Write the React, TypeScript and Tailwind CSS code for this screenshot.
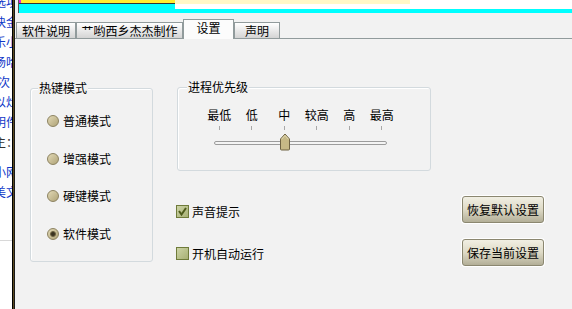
import React from "react";

const Radio = ({ label, checked }: { label: string; checked?: boolean }) => (
  <div className="flex items-center h-[14px]">
    <span className="w-[12px] h-[12px] rounded-full border border-[#8c8260] bg-gradient-to-br from-[#e2d9b6] to-[#b0a478] flex items-center justify-center">
      {checked && (
        <span className="w-[6px] h-[6px] rounded-full bg-[#3a3220] border border-[#6d6342]" />
      )}
    </span>
    <span className="ml-[4px] text-[12px] leading-[14px]">{label}</span>
  </div>
);

const Check = ({ label, checked }: { label: string; checked?: boolean }) => (
  <div className="flex items-center h-[13px]">
    <span className="w-[13px] h-[13px] border border-[#6f7b3a] bg-gradient-to-br from-[#cdd4a6] to-[#a7b074] flex items-center justify-center">
      {checked && (
        <svg width="11" height="11" viewBox="0 0 11 11">
          <path d="M2 5 L4.5 8.5 L9 2" fill="none" stroke="#4e5b1c" strokeWidth="2" />
        </svg>
      )}
    </span>
    <span className="ml-[3px] text-[12px] leading-[14px]">{label}</span>
  </div>
);

const Button = ({ label }: { label: string }) => (
  <button className="w-[82px] h-[27px] rounded-[3px] border border-[#8b8770] bg-gradient-to-b from-[#f1efe3] via-[#dedac6] to-[#b3af98] text-[12px] leading-[14px] text-black shadow-[0_0_0_1px_#ffffff]">
    {label}
  </button>
);

const Tab = ({ label, w, active }: { label: string; w: string; active?: boolean }) =>
  active ? (
    <div
      className={`${w} h-[20px] mb-[-1px] bg-[#fcfcfc] border border-b-0 border-[#919b9c] flex justify-center pt-[1px] text-[12px] leading-[14px] relative`}
    >
      {label}
    </div>
  ) : (
    <div
      className={`${w} h-[16px] bg-gradient-to-b from-[#ffffff] to-[#d4d4d4] border border-b-0 border-[#919b9c] flex items-center justify-center text-[12px] leading-[14px]`}
    >
      {label}
    </div>
  );

const leftLines = ["选项", "块金", "乐小", "场哈", "(次", "以灶", "明件"];

export default function App() {
  const levels = ["最低", "低", "中", "较高", "高", "最高"];
  return (
    <div className="w-[572px] h-[309px] flex overflow-hidden bg-[#f2f2f2] text-black font-['Noto_Sans_CJK_SC','Noto_Sans',sans-serif]">
      {/* clipped window behind */}
      <div className="w-[12px] h-full bg-white overflow-hidden flex flex-col">
        <div className="mt-[-8px] ml-[-6px] flex flex-col text-[12px] leading-[20px] text-[#1038c8] whitespace-nowrap">
          {leftLines.map((t) => (
            <span key={t}>{t}</span>
          ))}
          <span className="text-[#333]">主：</span>
          <span className="mt-[10px]">小网</span>
          <span>美文</span>
        </div>
        <div className="mt-[38px] h-px bg-[#d8d8d8]" />
      </div>
      <div className="w-px h-full bg-black" />
      <div className="w-px h-full bg-[#5a4a20]" />
      <div className="w-px h-full bg-[#1a1a1a]" />

      <div className="flex-1 flex flex-col">
        {/* strip of the window above */}
        <div className="h-[13px] flex">
          <div className="w-[3px] bg-[#f2f2f2]" />
          <div className="w-px bg-[#555]" />
          <div className="w-[156px] flex flex-col">
            <div className="h-[3px] flex">
              <div className="w-[2px] bg-[#e020e0]" />
              <div className="flex-1 bg-[#ffee30]" />
            </div>
            <div className="h-px bg-[#333]" />
            <div className="flex-1 bg-[#00ffff]" />
          </div>
          <div className="w-[235px] flex flex-col">
            <div className="h-[4px] bg-[#fff8c8]" />
            <div className="h-[5px] bg-white" />
            <div className="flex-1 bg-[#00ffff]" />
          </div>
          <div className="flex-1 flex flex-col">
            <div className="h-[9px] bg-white" />
            <div className="flex-1 bg-[#00ffff]" />
          </div>
        </div>

        {/* tabs */}
        <div className="h-[26px] flex items-end pl-[1px] border-b border-[#919b9c]">
          <Tab label="软件说明" w="w-[60px]" />
          <Tab label="艹哟西乡杰杰制作" w="w-[107px]" />
          <Tab label="设置" w="w-[51px]" active />
          <Tab label="声明" w="w-[46px]" />
        </div>

        {/* page */}
        <div className="flex-1 flex pt-[49px] pl-[15px]">
          <div className="relative w-[123px] h-[174px] border border-[#d3dade] rounded-[3px] shadow-[inset_1px_1px_0_#ffffff] flex flex-col pl-[16px] pt-[25px] gap-[23.5px]">
            <span className="absolute left-[7px] top-[-8px] px-[1px] bg-[#f2f2f2] text-[12px] leading-[14px]">
              热键模式
            </span>
            <Radio label="普通模式" />
            <Radio label="增强模式" />
            <Radio label="硬键模式" />
            <Radio label="软件模式" checked />
          </div>

          <div className="ml-[24px] mt-[-1px] w-[367px] flex flex-col">
            <div className="relative w-[254px] h-[84px] border border-[#d3dade] rounded-[3px] shadow-[inset_1px_1px_0_#ffffff] flex flex-col pt-[20px]">
              <span className="absolute left-[9px] top-[-8px] px-[1px] bg-[#f2f2f2] text-[12px] leading-[14px]">
                进程优先级
              </span>
              <div className="ml-[25px] w-[195px] grid grid-cols-6">
                {levels.map((l) => (
                  <span key={l} className="text-center text-[12px] leading-[14px]">
                    {l}
                  </span>
                ))}
                {levels.map((l) => (
                  <span key={l + "t"} className="flex justify-center mt-[4px]">
                    <span className="w-px h-[4px] bg-[#a8a8a8]" />
                  </span>
                ))}
              </div>
              <div className="relative ml-[36px] mt-[11px] w-[173px] h-[4px] border border-[#9c9c9c] bg-[#f4f4f4] rounded-[2px]">
                <svg
                  className="absolute left-[64px] top-[-9px]"
                  width="12"
                  height="18"
                  viewBox="0 0 12 18"
                >
                  <path
                    d="M1.5 6 L6 1 L10.5 6 L10.5 16 Q10.5 17 9.5 17 L2.5 17 Q1.5 17 1.5 16 Z"
                    fill="#c6b986"
                    stroke="#6e6343"
                    strokeWidth="1"
                  />
                  <path d="M2.5 6.3 L6 2.4 L9.5 6.3" fill="none" stroke="#e6dcb8" strokeWidth="1" />
                </svg>
              </div>
            </div>

            <div className="flex justify-between mt-[25px]">
              <div className="ml-[-1px] pt-[9px] flex flex-col gap-[29px]">
                <Check label="声音提示" checked />
                <Check label="开机自动运行" />
              </div>
              <div className="flex flex-col gap-[16px]">
                <Button label="恢复默认设置" />
                <Button label="保存当前设置" />
              </div>
            </div>
          </div>
        </div>
      </div>
    </div>
  );
}
